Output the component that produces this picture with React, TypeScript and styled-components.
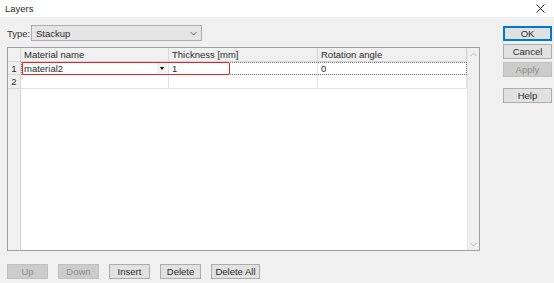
import React from "react";
import styled, { createGlobalStyle } from "styled-components";

const Global = createGlobalStyle`
  html, body { margin: 0; padding: 0; background: #f0f0f0; }
  body { font-family: "Liberation Sans", Arial, sans-serif; font-size: 9.5px; color: #2a2a2a; }
  * { box-sizing: border-box; }
`;

const Window = styled.div`
  width: 554px;
  height: 283px;
  display: flex;
  flex-direction: column;
  background: #f0f0f0;
  overflow: hidden;
`;

const TitleBar = styled.div`
  height: 17px;
  background: #ffffff;
  display: flex;
  align-items: center;
  justify-content: space-between;
  padding: 0 5px 1px 5px;
`;

const Title = styled.span`
  font-size: 9.5px;
  color: #2a2a2a;
`;

const CloseBtn = styled.div`
  width: 14px;
  height: 14px;
  display: flex;
  align-items: center;
  justify-content: center;
  margin-right: 2px;
`;

const Body = styled.div`
  flex: 1;
  display: flex;
`;

const LeftCol = styled.div`
  width: 480px;
  padding-left: 7px;
  display: flex;
  flex-direction: column;
`;

const TypeRow = styled.div`
  margin-top: 8px;
  height: 16px;
  display: flex;
  align-items: center;
`;

const Label = styled.span`
  width: 24px;
  color: #333;
`;

const Combo = styled.div`
  width: 171px;
  height: 16px;
  background: #e5e5e5;
  border: 1px solid #adadad;
  display: flex;
  align-items: center;
  justify-content: space-between;
  padding: 0 4px 0 4px;
`;

const Grid = styled.div`
  margin-top: 6px;
  width: 473px;
  height: 204px;
  border: 1px solid #a0a0a0;
  display: flex;
  background: #fff;
`;

const TableArea = styled.div`
  flex: 1;
  display: flex;
  flex-direction: column;
  background: linear-gradient(to right, #f0f0f0 0 12px, #d6d6d6 12px 13px, #ffffff 13px);
`;

const Row = styled.div<{ $header?: boolean; $h: number }>`
  position: relative;
  display: grid;
  grid-template-columns: 13px 148px 149px 149px;
  height: ${(p) => p.$h}px;
  background: ${(p) => (p.$header ? "#f0f0f0" : "#ffffff")};
`;

const Cell = styled.div<{ $kind: "corner" | "head" | "num" | "data" }>`
  display: flex;
  align-items: center;
  padding-left: ${(p) => (p.$kind === "num" || p.$kind === "corner" ? 0 : 3)}px;
  justify-content: ${(p) => (p.$kind === "num" ? "center" : "flex-start")};
  background: ${(p) => (p.$kind === "data" ? "#ffffff" : "#f0f0f0")};
  border-right: 1px solid ${(p) => (p.$kind === "data" ? "#e3e3e3" : "#d6d6d6")};
  border-bottom: 1px solid ${(p) => (p.$kind === "data" ? "#e3e3e3" : "#d6d6d6")};
  position: relative;
`;

const DropBtn = styled.div`
  position: absolute;
  right: 1px;
  top: 1px;
  bottom: 1px;
  width: 10px;
  background: #f2f2f2;
  display: flex;
  align-items: center;
  justify-content: center;
`;

const Tri = styled.div`
  width: 0;
  height: 0;
  border-left: 2.5px solid transparent;
  border-right: 2.5px solid transparent;
  border-top: 3px solid #000;
`;

const FocusRect = styled.div`
  position: absolute;
  left: 13px;
  top: 0;
  width: 446px;
  height: 13px;
  border: 1px dotted #7a7a7a;
  pointer-events: none;
`;

const RedBox = styled.div`
  position: absolute;
  left: 14px;
  top: 0;
  width: 208px;
  height: 13px;
  border: 1.5px solid #e8202a;
  border-radius: 2px;
  pointer-events: none;
`;

const ScrollBar = styled.div`
  width: 12px;
  background: #f0f0f0;
  border-left: 1px solid #e6e6e6;
  display: flex;
  flex-direction: column;
  justify-content: space-between;
  align-items: center;
  padding: 4px 0 3px 0;
`;

const BottomBar = styled.div`
  margin-top: 13px;
  display: flex;
  gap: 10px;
`;

const Btn = styled.div<{ $w?: number; $disabled?: boolean; $default?: boolean }>`
  width: ${(p) => p.$w ?? 41}px;
  height: 15px;
  display: flex;
  align-items: center;
  justify-content: center;
  background: ${(p) => (p.$disabled ? "#cccccc" : "#e1e1e1")};
  border: 1px solid ${(p) => (p.$default ? "#0078d7" : p.$disabled ? "#bfbfbf" : "#adadad")};
  box-shadow: ${(p) => (p.$default ? "inset 0 0 0 1px #0078d7" : "none")};
  color: ${(p) => (p.$disabled ? "#8c8c8c" : "#2a2a2a")};
`;

const RightCol = styled.div`
  margin-left: 23px;
  padding-top: 9px;
  display: flex;
  flex-direction: column;
  gap: 3px;
`;

const Spacer = styled.div`
  height: 5px;
`;

const Chevron = ({ up, color = "#b8b8b8" }: { up?: boolean; color?: string }) => (
  <svg width="7" height="5" viewBox="0 0 7 5">
    <path d={up ? "M0.5 4 L3.5 1 L6.5 4" : "M0.5 1 L3.5 4 L6.5 1"} fill="none" stroke={color} strokeWidth="1" />
  </svg>
);

export default function App() {
  return (
    <>
      <Global />
      <Window>
        <TitleBar>
          <Title>Layers</Title>
          <CloseBtn>
            <svg width="9" height="9" viewBox="0 0 9 9">
              <path d="M0.5 0.5 L8.5 8.5 M8.5 0.5 L0.5 8.5" stroke="#222" strokeWidth="1" />
            </svg>
          </CloseBtn>
        </TitleBar>
        <Body>
          <LeftCol>
            <TypeRow>
              <Label>Type:</Label>
              <Combo>
                <span>Stackup</span>
                <Chevron color="#707070" />
              </Combo>
            </TypeRow>
            <Grid>
              <TableArea>
                <Row $header $h={14}>
                  <Cell $kind="corner" />
                  <Cell $kind="head">Material name</Cell>
                  <Cell $kind="head">Thickness [mm]</Cell>
                  <Cell $kind="head">Rotation angle</Cell>
                </Row>
                <Row $h={13}>
                  <Cell $kind="num">1</Cell>
                  <Cell $kind="data">
                    material2
                    <DropBtn>
                      <Tri />
                    </DropBtn>
                  </Cell>
                  <Cell $kind="data">1</Cell>
                  <Cell $kind="data">0</Cell>
                  <FocusRect />
                  <RedBox />
                </Row>
                <Row $h={14}>
                  <Cell $kind="num">2</Cell>
                  <Cell $kind="data" />
                  <Cell $kind="data" />
                  <Cell $kind="data" />
                </Row>
              </TableArea>
              <ScrollBar>
                <Chevron up />
                <Chevron />
              </ScrollBar>
            </Grid>
            <BottomBar>
              <Btn $disabled>Up</Btn>
              <Btn $disabled>Down</Btn>
              <Btn>Insert</Btn>
              <Btn>Delete</Btn>
              <Btn $w={49}>Delete All</Btn>
            </BottomBar>
          </LeftCol>
          <RightCol>
            <Btn $w={49} $default>OK</Btn>
            <Btn $w={49}>Cancel</Btn>
            <Btn $w={49} $disabled>Apply</Btn>
            <Spacer />
            <Btn $w={49}>Help</Btn>
          </RightCol>
        </Body>
      </Window>
    </>
  );
}
